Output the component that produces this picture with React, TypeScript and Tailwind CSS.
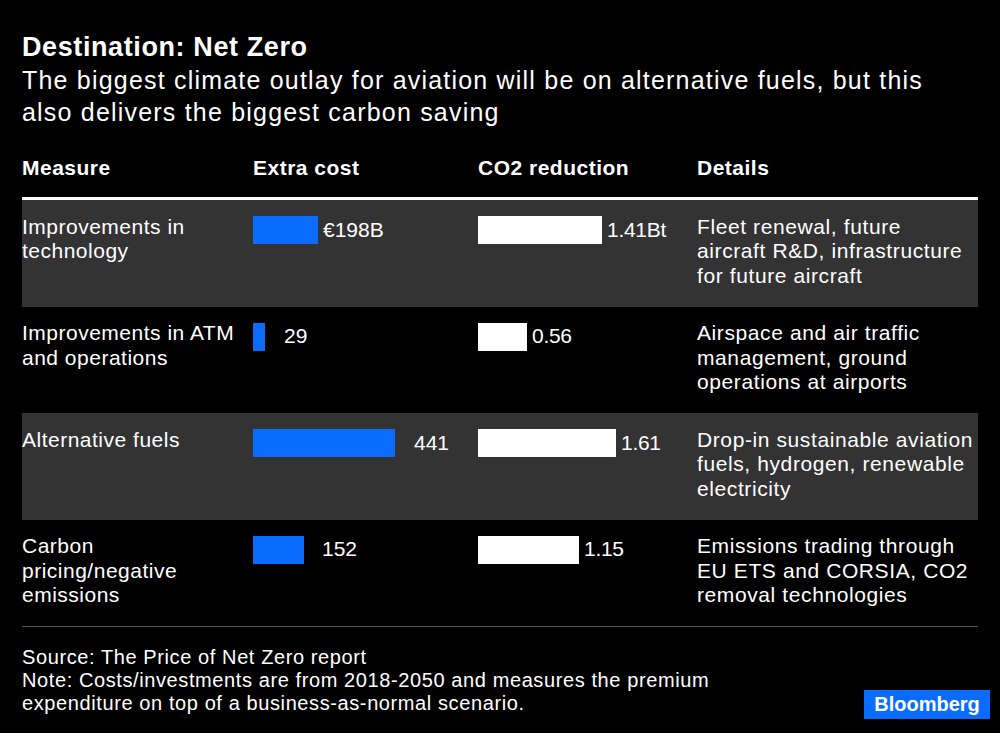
import React from "react";

type Row = {
  measure: string[];
  cost: number;
  costLabel: string;
  costGap: number;
  co2: number;
  co2Label: string;
  details: string[];
  gray: boolean;
};

const rows: Row[] = [
  {
    measure: ["Improvements in", "technology"],
    cost: 65,
    costLabel: "€198B",
    costGap: 5,
    co2: 124,
    co2Label: "1.41Bt",
    details: ["Fleet renewal, future", "aircraft R&D, infrastructure", "for future aircraft"],
    gray: true,
  },
  {
    measure: ["Improvements in ATM", "and operations"],
    cost: 12,
    costLabel: "29",
    costGap: 19,
    co2: 49,
    co2Label: "0.56",
    details: ["Airspace and air traffic", "management, ground", "operations at airports"],
    gray: false,
  },
  {
    measure: ["Alternative fuels"],
    cost: 142,
    costLabel: "441",
    costGap: 19,
    co2: 138,
    co2Label: "1.61",
    details: ["Drop-in sustainable aviation", "fuels, hydrogen, renewable", "electricity"],
    gray: true,
  },
  {
    measure: ["Carbon", "pricing/negative", "emissions"],
    cost: 51,
    costLabel: "152",
    costGap: 18,
    co2: 101,
    co2Label: "1.15",
    details: ["Emissions trading through", "EU ETS and CORSIA, CO2", "removal technologies"],
    gray: false,
  },
];

const font = { fontFamily: '"Liberation Sans", Arial, Helvetica, sans-serif' };

export default function App() {
  return (
    <div
      className="w-[1000px] h-[733px] bg-black text-white px-[22px] overflow-hidden"
      style={font}
    >
      <div className="pt-[31px] text-[27px] leading-[32px] font-bold tracking-[0.6px] whitespace-nowrap">
        Destination: Net Zero
      </div>
      <div className="mt-[1px] text-[25px] leading-[32px] tracking-[1.2px] whitespace-nowrap">
        The biggest climate outlay for aviation will be on alternative fuels, but this
        <br />
        also delivers the biggest carbon saving
      </div>

      <div className="mt-[28px] grid grid-cols-[231px_225px_219px_1fr] text-[21px] leading-[24px] font-bold tracking-[0.5px] whitespace-nowrap">
        <div>Measure</div>
        <div>Extra cost</div>
        <div>CO2 reduction</div>
        <div>Details</div>
      </div>
      <div className="mt-[17px] h-[3px] bg-white" />

      <div className="flex flex-col">
        {rows.map((r, i) => (
          <div
            key={i}
            className={`grid grid-cols-[231px_225px_219px_1fr] h-[106.5px] text-[21px] leading-[24.5px] whitespace-nowrap ${
              r.gray ? "bg-[#333333]" : "bg-black"
            }`}
          >
            <div className="pt-[14.5px] tracking-[0.5px]">
              {r.measure.map((l, j) => (
                <div key={j}>{l}</div>
              ))}
            </div>
            <div className="pt-[16px]">
              <div className="flex items-center h-[28px]">
                <div className="h-[28px] bg-[#0a6cff]" style={{ width: r.cost }} />
                <span style={{ marginLeft: r.costGap }}>{r.costLabel}</span>
              </div>
            </div>
            <div className="pt-[16px]">
              <div className="flex items-center h-[28px]">
                <div className="h-[28px] bg-white" style={{ width: r.co2 }} />
                <span className="ml-[5px] tracking-[-0.3px]">{r.co2Label}</span>
              </div>
            </div>
            <div className="pt-[14.5px] tracking-[0.6px]">
              {r.details.map((l, j) => (
                <div key={j}>{l}</div>
              ))}
            </div>
          </div>
        ))}
      </div>
      <div className="h-[1px] bg-[#555555]" />

      <div className="mt-[18.5px] flex justify-between items-end">
        <div className="text-[20px] leading-[23px] tracking-[0.6px] whitespace-nowrap">
          <div>Source: The Price of Net Zero report</div>
          <div>Note: Costs/investments are from 2018-2050 and measures the premium</div>
          <div>expenditure on top of a business-as-normal scenario.</div>
        </div>
        <div className="mr-[-12px] mb-[-4px] w-[126px] h-[29px] bg-[#0a6cff] flex items-center justify-center text-[20px] font-bold leading-none">
          Bloomberg
        </div>
      </div>
    </div>
  );
}
